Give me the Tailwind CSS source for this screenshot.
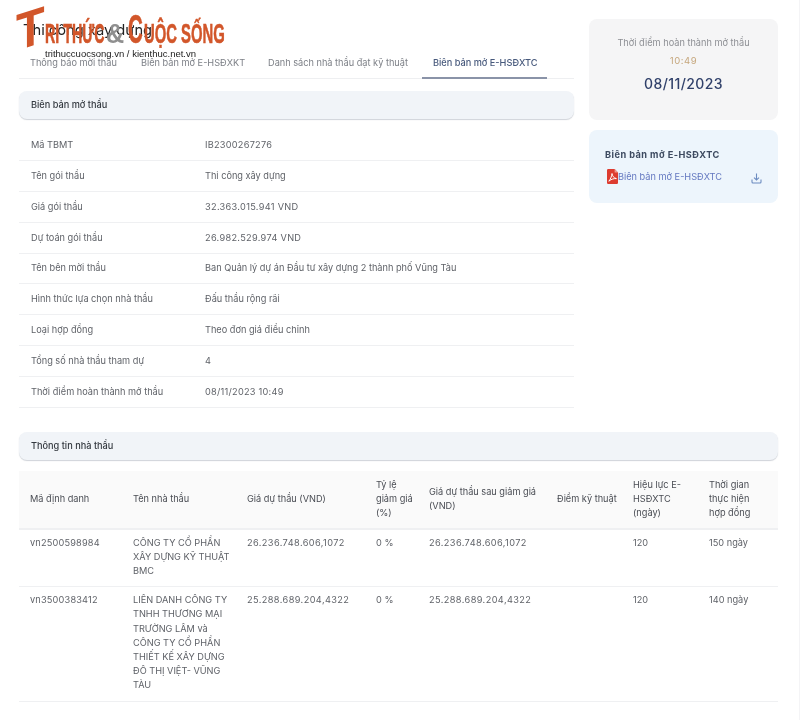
<!DOCTYPE html>
<html lang="vi">
<head>
    <meta charset="UTF-8">
    <title>Biên bản mở thầu</title>
    <script src="https://cdn.jsdelivr.net/npm/@tailwindcss/browser@4"></script>
</head>
<body class="bg-[#f4f4f6] font-['Inter','Liberation_Sans',sans-serif] overflow-hidden">
<div class="relative w-[799px] h-[720px] bg-white overflow-hidden text-[9.2px] leading-[14.2px] text-[#5f6268] blur-[0.3px]">

    <div class="pl-[19px] pr-[21px]">
        <div class="flex items-start">
            <!-- Left column -->
            <div class="w-[555px] shrink-0">
                <h1 class="pt-[20px] pl-[4px] text-[14.7px] leading-[20px] font-normal text-[#222]">Thi công xây dựng</h1>

                <div class="flex mt-[12px] h-[27px] border-b border-[#eeeff1] pl-[3px] whitespace-nowrap">
                    <div class="w-[108px] pl-[8px] pt-[4px] text-[#7d8087]">Thông báo mời thầu</div>
                    <div class="w-[129px] pl-[11px] pt-[4px] text-[#7d8087]">Biên bản mở E-HSĐXKT</div>
                    <div class="w-[163px] pl-[9px] pt-[4px] text-[#7d8087]">Danh sách nhà thầu đạt kỹ thuật</div>
                    <div class="w-[125px] h-[27px] pl-[11px] pt-[4px] border-b-2 border-[#8a93a8] text-[#47597c] font-medium">Biên bản mở E-HSĐXTC</div>
                </div>

                <div class="mt-[12px] h-[28px] flex items-center pl-[12px] rounded-lg bg-[#f1f4f8] shadow-[0_1px_1px_rgba(120,130,145,0.35)] text-[#33383f] font-medium">Biên bản mở thầu</div>

                <div class="mt-[11px]">
                    <div class="flex items-center h-[30.9px] border-b border-[#eff0f2]"><div class="w-[186px] pl-[12px]">Mã TBMT</div><div class="tracking-[0.25px]">IB2300267276</div></div>
                    <div class="flex items-center h-[30.9px] border-b border-[#eff0f2]"><div class="w-[186px] pl-[12px]">Tên gói thầu</div><div>Thi công xây dựng</div></div>
                    <div class="flex items-center h-[30.9px] border-b border-[#eff0f2]"><div class="w-[186px] pl-[12px]">Giá gói thầu</div><div class="tracking-[0.3px]">32.363.015.941 VND</div></div>
                    <div class="flex items-center h-[30.9px] border-b border-[#eff0f2]"><div class="w-[186px] pl-[12px]">Dự toán gói thầu</div><div class="tracking-[0.3px]">26.982.529.974 VND</div></div>
                    <div class="flex items-center h-[30.9px] border-b border-[#eff0f2]"><div class="w-[186px] pl-[12px]">Tên bên mời thầu</div><div>Ban Quản lý dự án Đầu tư xây dựng 2 thành phố Vũng Tàu</div></div>
                    <div class="flex items-center h-[30.9px] border-b border-[#eff0f2]"><div class="w-[186px] pl-[12px]">Hình thức lựa chọn nhà thầu</div><div>Đấu thầu rộng rãi</div></div>
                    <div class="flex items-center h-[30.9px] border-b border-[#eff0f2]"><div class="w-[186px] pl-[12px]">Loại hợp đồng</div><div>Theo đơn giá điều chỉnh</div></div>
                    <div class="flex items-center h-[30.9px] border-b border-[#eff0f2]"><div class="w-[186px] pl-[12px]">Tổng số nhà thầu tham dự</div><div>4</div></div>
                    <div class="flex items-center h-[30.9px] border-b border-[#eff0f2]"><div class="w-[186px] pl-[12px]">Thời điểm hoàn thành mở thầu</div><div class="tracking-[0.25px]">08/11/2023 10:49</div></div>
                </div>
            </div>

            <!-- Right column -->
            <div class="w-[189px] ml-[15px] shrink-0 pt-[19px]">
                <div class="h-[101px] rounded-lg bg-[#f5f5f6] flex flex-col items-center pt-[17px]">
                    <div class="text-[#8d8f94]">Thời điểm hoàn thành mở thầu</div>
                    <div class="mt-[4px] text-[#c5a67c] tracking-[0.6px] text-[9.5px]">10:49</div>
                    <div class="mt-[6px] text-[14px] leading-[20px] font-medium tracking-[0.4px] text-[#30406a]">08/11/2023</div>
                </div>
                <div class="mt-[10px] h-[73px] rounded-lg bg-[#edf5fc] pl-[16px] pr-[16px] pt-[18px]">
                    <div class="font-bold tracking-[0.45px] text-[#3d4a60]">Biên bản mở E-HSĐXTC</div>
                    <div class="flex items-center mt-[7px] pl-[2px]">
                        <svg class="w-[11px] h-[15px] shrink-0" viewBox="0 0 11 15">
                            <path d="M1.2 0H7.6L11 3.4V13.8A1.2 1.2 0 0 1 9.8 15H1.2A1.2 1.2 0 0 1 0 13.8V1.2A1.2 1.2 0 0 1 1.2 0Z" fill="#dd3c30"/>
                            <path d="M7.6 0V3.4H11Z" fill="#f09a90"/>
                            <path d="M5 4.5C4.7 7.5 3.4 10.5 1.8 12.2M5 4.5C5.3 7 6.8 9 9.4 9.6C7 9.4 4.5 10 1.8 12.2" fill="none" stroke="#fff" stroke-width="1"/>
                        </svg>
                        <span class="text-[#6478c0]">Biên bản mở E-HSĐXTC</span>
                        <svg class="ml-auto mt-[3px] w-[11px] h-[11px] shrink-0" viewBox="0 0 11 11" fill="none" stroke="#6d8cc0" stroke-width="1.1">
                            <path d="M5.5 0.5V7M3 4.6L5.5 7L8 4.6"/>
                            <path d="M1 6.5V9A1 1 0 0 0 2 10H9A1 1 0 0 0 10 9V6.5"/>
                        </svg>
                    </div>
                </div>
            </div>
        </div>

        <!-- Bidders -->
        <div class="mt-[24px] h-[28px] flex items-center pl-[12px] rounded-lg bg-[#f1f4f8] shadow-[0_1px_1px_rgba(120,130,145,0.35)] text-[#33383f] font-medium">Thông tin nhà thầu</div>

        <table class="mt-[11px] w-[759px] table-fixed border-collapse">
            <thead>
                <tr class="bg-[#fafafa] border-b-2 border-[#eff0f2] text-left align-middle text-[#4a4d54]">
                    <th class="w-[103px] py-[7px] pl-[11px] font-normal">Mã định danh</th>
                    <th class="w-[114px] py-[7px] pl-[11px] font-normal">Tên nhà thầu</th>
                    <th class="w-[129px] py-[7px] pl-[11px] font-normal">Giá dự thầu (VND)</th>
                    <th class="w-[53px] py-[7px] pl-[11px] font-normal">Tỷ lệ giảm giá (%)</th>
                    <th class="w-[128px] py-[7px] pl-[11px] font-normal">Giá dự thầu sau giảm giá (VND)</th>
                    <th class="w-[76px] py-[7px] pl-[11px] font-normal">Điểm kỹ thuật</th>
                    <th class="w-[76px] py-[7px] pl-[11px] pr-[8px] font-normal">Hiệu lực E-HSĐXTC (ngày)</th>
                    <th class="py-[7px] pl-[11px] pr-[16px] font-normal">Thời gian thực hiện hợp đồng</th>
                </tr>
            </thead>
            <tbody class="align-top">
                <tr class="border-b border-[#eff0f2]">
                    <td class="pt-[6px] pb-[8px] pl-[11px] tracking-[0.18px]">vn2500598984</td>
                    <td class="pt-[6px] pb-[8px] pl-[11px]">CÔNG TY CỔ PHẦN<br>XÂY DỰNG KỸ THUẬT<br>BMC</td>
                    <td class="pt-[6px] pb-[8px] pl-[11px] tracking-[0.4px]">26.236.748.606,1072</td>
                    <td class="pt-[6px] pb-[8px] pl-[11px]">0 %</td>
                    <td class="pt-[6px] pb-[8px] pl-[11px] tracking-[0.4px]">26.236.748.606,1072</td>
                    <td class="pt-[6px] pb-[8px] pl-[11px]"></td>
                    <td class="pt-[6px] pb-[8px] pl-[11px]">120</td>
                    <td class="pt-[6px] pb-[8px] pl-[11px]">150 ngày</td>
                </tr>
                <tr class="border-b border-[#eff0f2]">
                    <td class="pt-[6px] pb-[8px] pl-[11px] tracking-[0.18px]">vn3500383412</td>
                    <td class="pt-[6px] pb-[8px] pl-[11px]">LIÊN DANH CÔNG TY<br>TNHH THƯƠNG MẠI<br>TRƯỜNG LÂM và<br>CÔNG TY CỔ PHẦN<br>THIẾT KẾ XÂY DỰNG<br>ĐÔ THỊ VIỆT- VŨNG<br>TÀU</td>
                    <td class="pt-[6px] pb-[8px] pl-[11px] tracking-[0.4px]">25.288.689.204,4322</td>
                    <td class="pt-[6px] pb-[8px] pl-[11px]">0 %</td>
                    <td class="pt-[6px] pb-[8px] pl-[11px] tracking-[0.4px]">25.288.689.204,4322</td>
                    <td class="pt-[6px] pb-[8px] pl-[11px]"></td>
                    <td class="pt-[6px] pb-[8px] pl-[11px]">120</td>
                    <td class="pt-[6px] pb-[8px] pl-[11px]">140 ngày</td>
                </tr>
            </tbody>
        </table>
    </div>

    <!-- Logo overlay -->
    <div class="absolute left-0 top-0 w-[240px] h-[70px] pointer-events-none font-['Liberation_Sans',sans-serif] font-bold text-[#d2562a] whitespace-nowrap">
        <span class="absolute left-[16px] top-[7px] text-[52px] leading-[52px] origin-top-left scale-x-[0.9] -skew-y-[16deg]">T</span>
        <span class="absolute left-[45px] top-[20px] text-[28px] leading-[28px] origin-top-left scale-x-[0.51] [-webkit-text-stroke:0.6px_#d2562a]">RI THỨC</span>
        <span class="absolute left-[106px] top-[20px] text-[28px] leading-[28px] text-[#8f8f8f] origin-top-left scale-x-[0.9]">&amp;</span>
        <span class="absolute left-[128px] top-[9px] text-[41px] leading-[41px] origin-top-left scale-x-[0.5] [-webkit-text-stroke:0.6px_#d2562a]">C</span>
        <span class="absolute left-[144px] top-[20px] text-[28px] leading-[28px] origin-top-left scale-x-[0.53] [-webkit-text-stroke:0.6px_#d2562a]">UỘC SỐNG</span>
        <span class="absolute left-[45px] top-[48px] text-[9.5px] leading-[12px] font-normal text-[#222]">trithuccuocsong.vn / kienthuc.net.vn</span>
    </div>
</div>
</body>
</html>
